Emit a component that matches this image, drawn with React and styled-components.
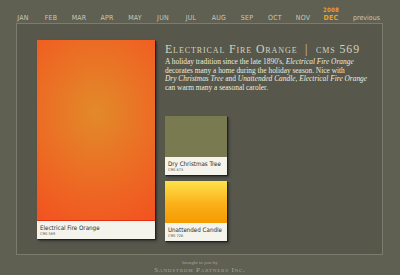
import React from "react";
import styled, { createGlobalStyle } from "styled-components";

const GlobalStyle = createGlobalStyle`
  html, body {
    margin: 0;
    padding: 0;
    background: #5f5f52;
  }
`;

const Page = styled.div`
  width: 400px;
  height: 275px;
  overflow: hidden;
  background: #5f5f52;
`;

const Nav = styled.nav`
  display: flex;
  align-items: flex-end;
  height: 23px;
  padding-left: 9px;
  box-sizing: border-box;
  padding-bottom: 1px;
`;

const Month = styled.div`
  width: 28px;
  position: relative;
  text-align: center;
  font-family: "DejaVu Sans Condensed", "DejaVu Sans", sans-serif;
  font-size: 7px;
  letter-spacing: 0.2px;
  color: ${(p) => (p.$active ? "#e8a41c" : "#c9c9b8")};
  font-weight: ${(p) => (p.$active ? "bold" : "normal")};
  line-height: 8px;
`;

const Year = styled.span`
  position: absolute;
  left: 0;
  right: 0;
  top: -8px;
  font-size: 6px;
`;

const Previous = styled.div`
  margin-left: 8px;
  font-family: "DejaVu Sans Condensed", "DejaVu Sans", sans-serif;
  font-size: 7px;
  color: #c9c9b8;
  line-height: 8px;
`;

const Frame = styled.div`
  margin: 0 17px 0 16px;
  height: 232px;
  box-sizing: border-box;
  border: 1px solid #7c7c6c;
  background: #57574c;
  display: flex;
  padding: 16px 0 0 20px;
`;

const Swatch = styled.div`
  width: ${(p) => p.$w}px;
  height: ${(p) => p.$h}px;
  display: flex;
  flex-direction: column;
  box-shadow: 1px 1px 1px #16272a, 2px 2px 3px rgba(0, 0, 0, 0.35);
`;

const Chip = styled.div`
  flex: 1;
  background: ${(p) => p.$bg};
`;

const Label = styled.div`
  height: ${(p) => p.$h}px;
  background: #f4f4ec;
  padding: 3px 0 0 3px;
  box-sizing: border-box;
  font-family: "DejaVu Sans Condensed", "DejaVu Sans", sans-serif;
  color: #2a2a26;
  border-top: ${(p) => (p.$line ? `1px solid ${p.$line}` : "none")};
`;

const LabelName = styled.div`
  font-size: 6.2px;
  line-height: 7px;
`;

const LabelCode = styled.div`
  font-size: 3.8px;
  line-height: 5px;
  color: #55554c;
`;

const Info = styled.div`
  margin-left: 10px;
  width: 205px;
  display: flex;
  flex-direction: column;
`;

const Title = styled.h1`
  margin: 3px 0 0;
  font-family: "Liberation Serif", serif;
  font-weight: normal;
  font-variant: small-caps;
  font-size: 11.8px;
  letter-spacing: 0.9px;
  color: #d4d4be;
  line-height: 12px;
  white-space: nowrap;
`;

const Text = styled.p`
  margin: 3px 0 0;
  font-family: "Liberation Serif", serif;
  font-size: 7.4px;
  line-height: 8.7px;
  color: #ececdc;
  white-space: nowrap;

  em {
    font-style: italic;
  }
`;

const Stack = styled.div`
  margin-top: 23px;
  display: flex;
  flex-direction: column;
  gap: 6px;
`;

const Footer = styled.footer`
  text-align: center;
  padding-top: 4px;
  font-family: "Liberation Serif", serif;
  color: #a8a896;
`;

const Credit = styled.div`
  font-size: 5px;
  line-height: 7px;
`;

const Company = styled.div`
  font-size: 7px;
  font-variant: small-caps;
  letter-spacing: 0.8px;
  line-height: 8px;
`;

const months = ["JAN", "FEB", "MAR", "APR", "MAY", "JUN", "JUL", "AUG", "SEP", "OCT", "NOV", "DEC"];

export default function App() {
  return (
    <Page>
      <GlobalStyle />
      <Nav>
        {months.map((m) => (
          <Month key={m} $active={m === "DEC"}>
            {m === "DEC" && <Year>2008</Year>}
            {m}
          </Month>
        ))}
        <Previous>previous</Previous>
      </Nav>
      <Frame>
        <Swatch $w={118} $h={199}>
          <Chip $bg="radial-gradient(ellipse 90% 70% at 50% 40%, #e28a2a 0%, #ec6c24 55%, #f25320 100%)" />
          <Label $h={19} $line="#e03010">
            <LabelName>Electrical Fire Orange</LabelName>
            <LabelCode>CMS 569</LabelCode>
          </Label>
        </Swatch>
        <Info>
          <Title>Electrical Fire Orange &nbsp;|&nbsp; cms 569</Title>
          <Text>
            A holiday tradition since the late 1890's, <em>Electrical Fire Orange</em>
            <br />
            decorates many a home during the holiday season. Nice with
            <br />
            <em>Dry Christmas Tree</em> and <em>Unattended Candle</em>, <em>Electrical Fire Orange</em>
            <br />
            can warm many a seasonal caroler.
          </Text>
          <Stack>
            <Swatch $w={62} $h={59}>
              <Chip $bg="#7a7a50" />
              <Label $h={18}>
                <LabelName>Dry Christmas Tree</LabelName>
                <LabelCode>CMS 873</LabelCode>
              </Label>
            </Swatch>
            <Swatch $w={62} $h={60}>
              <Chip $bg="linear-gradient(#ffe24a, #fbb01a 55%, #f59a00)" />
              <Label $h={18}>
                <LabelName>Unattended Candle</LabelName>
                <LabelCode>CMS 726</LabelCode>
              </Label>
            </Swatch>
          </Stack>
        </Info>
      </Frame>
      <Footer>
        <Credit>brought to you by</Credit>
        <Company>Sandstrom Partners Inc.</Company>
      </Footer>
    </Page>
  );
}
